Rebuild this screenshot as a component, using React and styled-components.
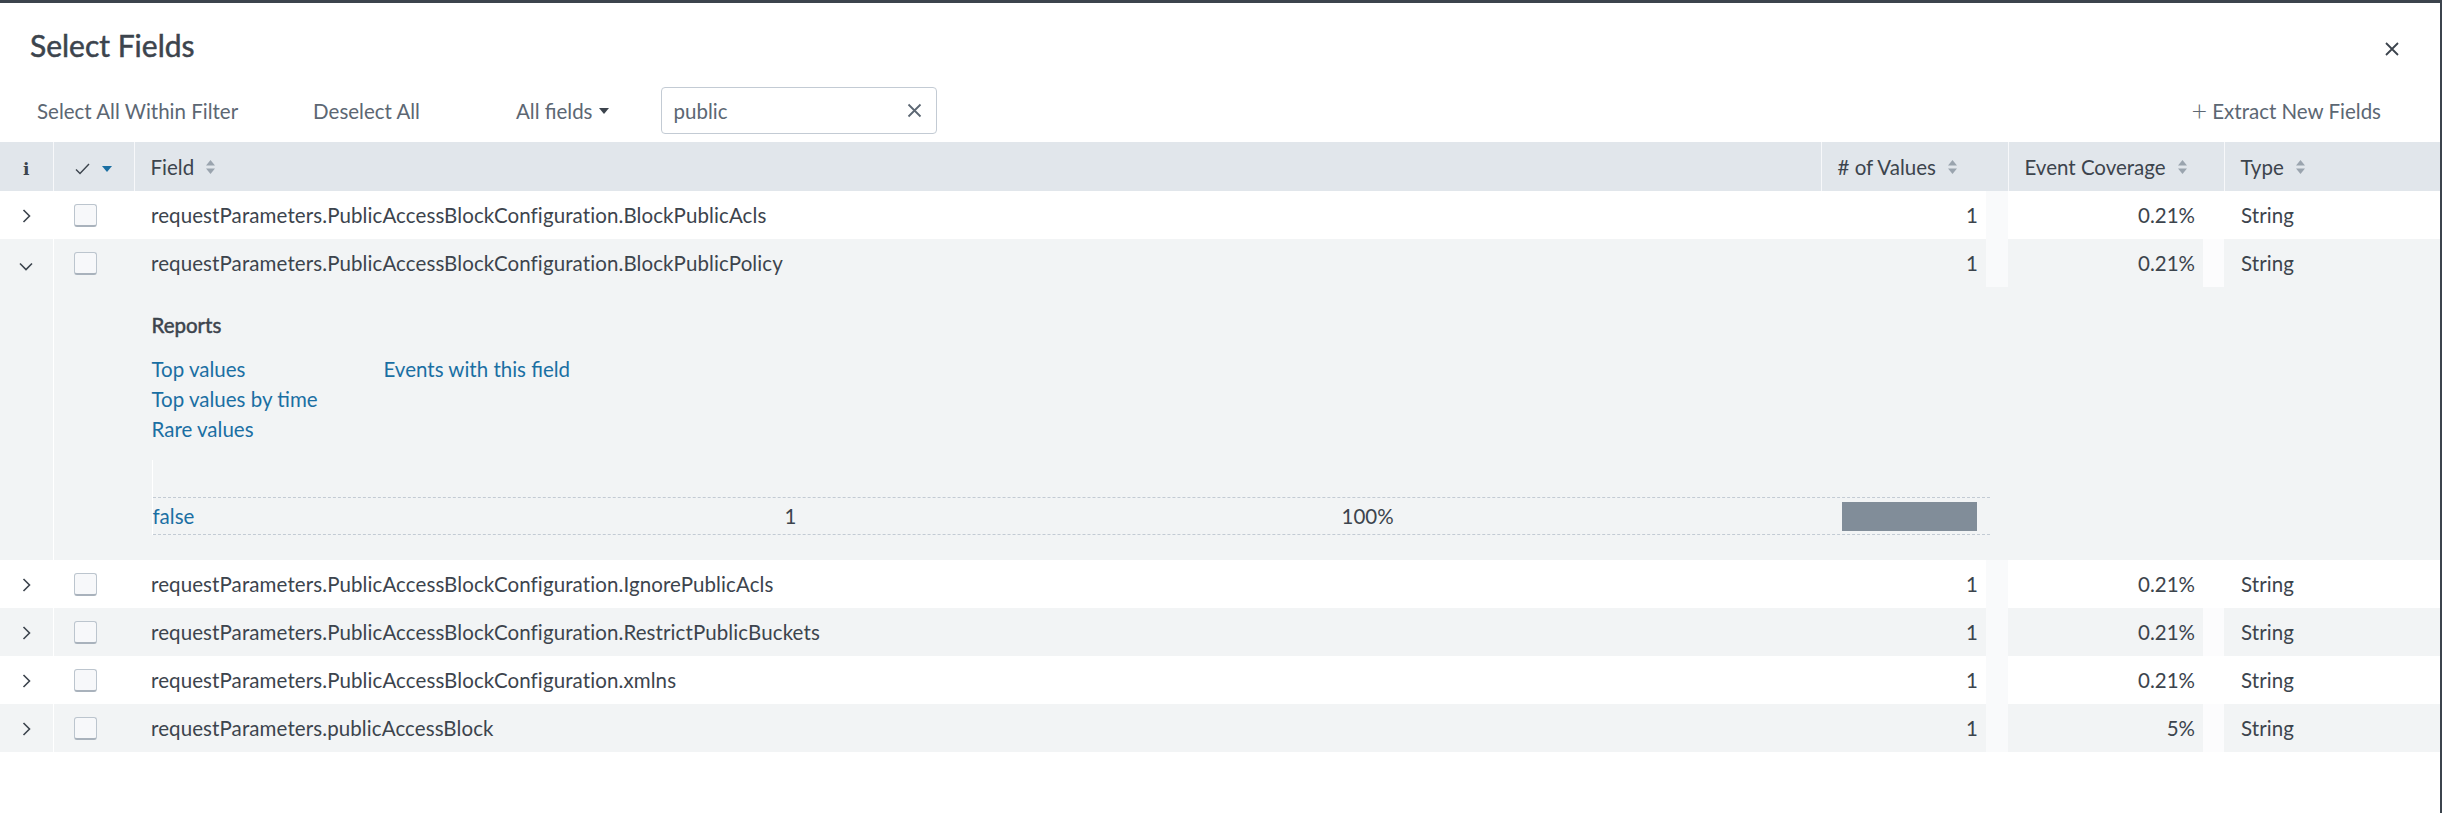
import React from 'react';
import styled, { createGlobalStyle } from 'styled-components';

const GlobalStyle = createGlobalStyle`
  html, body {
    margin: 0;
    padding: 0;
    background: #fff;
  }
  body {
    font-family: Lato, "Noto Sans", "Liberation Sans", sans-serif;
    color: #3c444d;
  }
`;

const Modal = styled.div`
  box-sizing: border-box;
  width: 2442px;
  height: 813px;
  border-top: 3px solid #3c444d;
  border-right: 2px solid #3c444d;
  background: #fff;
`;

const TitleBar = styled.div`
  display: flex;
  align-items: center;
  justify-content: space-between;
  height: 84px;
  padding: 0 40px 0 30px;
  box-sizing: border-box;
`;

const Title = styled.h1`
  margin: 0;
  font-size: 30px;
  font-weight: 400;
  -webkit-text-stroke: 0.5px #3c444d;
  color: #3c444d;
`;

const CloseButton = styled.button`
  border: 0;
  background: none;
  padding: 0;
  margin-top: 8px;
  width: 16px;
  height: 16px;
  display: flex;
  color: #3c444d;
`;

const Toolbar = styled.div`
  display: flex;
  align-items: center;
  height: 47px;
  padding: 0 59px 0 37px;
  margin-bottom: 8px;
`;

const ToolButton = styled.button`
  border: 0;
  background: none;
  padding: 0;
  margin-right: ${(p) => p.$gap || 0}px;
  font: inherit;
  font-size: 20.5px;
  color: #5c6773;
  display: flex;
  align-items: center;
  gap: 6px;
  white-space: nowrap;
`;

const Caret = styled.span`
  width: 0;
  height: 0;
  border-left: 5px solid transparent;
  border-right: 5px solid transparent;
  border-top: 6px solid ${(p) => p.$color || '#3c444d'};
  display: inline-block;
`;

const SearchBox = styled.div`
  box-sizing: border-box;
  width: 276px;
  height: 47px;
  border: 1px solid #c3cbd4;
  border-radius: 4px;
  display: flex;
  align-items: center;
  justify-content: space-between;
  padding: 0 14px 0 12px;
  font-size: 20.5px;
  color: #5c6773;
`;

const ExtractLink = styled(ToolButton)`
  margin-left: auto;
  gap: 5px;
`;

const Plus = styled.span`
  font-size: 27px;
  line-height: 1;
  font-weight: 300;
`;

const Table = styled.table`
  width: 2440px;
  border-collapse: collapse;
  table-layout: fixed;
  font-size: 20.5px;
`;

const HeadCell = styled.th`
  height: 49px;
  padding: 0 0 0 ${(p) => (p.$center ? 0 : 16)}px;
  background: #e1e6eb;
  border-left: ${(p) => (p.$first ? 0 : '1px solid #f7f8fa')};
  text-align: ${(p) => (p.$center ? 'center' : 'left')};
  font-weight: 400;
  color: #3c444d;
  white-space: nowrap;
`;

const HeadLabel = styled.span`
  display: inline-flex;
  align-items: center;
  gap: 12px;
`;

const InfoGlyph = styled.span`
  font-family: "DejaVu Serif", "Liberation Serif", serif;
  font-weight: 700;
  font-size: 17px;
`;

const Row = styled.tr`
  background: ${(p) => (p.$shade ? '#f2f4f5' : '#fff')};
`;

const Cell = styled.td`
  height: 48px;
  padding: 0 0 0 ${(p) => p.$pad ?? 16}px;
  border-left: ${(p) => (p.$line ? '1px solid #fff' : 0)};
  white-space: nowrap;
  overflow: hidden;
  letter-spacing: 0.1px;
  text-align: ${(p) => (p.$center ? 'center' : 'left')};
  vertical-align: middle;
`;

const NumCell = styled.td`
  height: 48px;
  padding: 0 ${(p) => p.$right}px 0 0;
  text-align: right;
  box-shadow: inset -${(p) => p.$strip}px 0 0 ${(p) => p.$stripColor};
`;

const Chevron = styled.span`
  display: inline-flex;
  color: #3c444d;
`;

const Checkbox = styled.span`
  display: block;
  box-sizing: border-box;
  width: 23px;
  height: 23px;
  border: 1px solid #bcc5ce;
  border-bottom: 2px solid #a9b2bc;
  border-radius: 3px;
  background: #f7f8fa;
`;

const ExpandCell = styled.td`
  padding: 24px 0 25px 98px;
  border-left: 1px solid #fff;
  vertical-align: top;
`;

const ReportsTitle = styled.div`
  font-weight: 400;
  -webkit-text-stroke: 0.5px #3c444d;
  line-height: 28px;
`;

const LinkGrid = styled.div`
  display: grid;
  grid-template-columns: 232px auto;
  grid-auto-rows: 30px;
  align-items: center;
  margin-top: 15px;
`;

const Link = styled.a`
  color: #1a6fa3;
  text-decoration: none;
  cursor: pointer;
`;

const ValueTable = styled.div`
  width: 1837px;
  margin-top: 16px;
  border-left: 1px solid #fff;
`;

const ValueHead = styled.div`
  height: 37px;
  border-bottom: 1px dashed #c3cbd4;
`;

const ValueRow = styled.div`
  display: grid;
  grid-template-columns: 632px 557px 500px 1fr;
  align-items: center;
  height: 36px;
  border-bottom: 1px dashed #c3cbd4;
`;

const Bar = styled.div`
  height: 29px;
  background: #818d99;
`;

const SortIcon = () => (
  <svg width="9" height="14" viewBox="0 0 9 14" fill="#9aa4ae">
    <path d="M4.5 0 L9 5.5 H0 Z" />
    <path d="M4.5 14 L9 8.5 H0 Z" />
  </svg>
);

const CloseIcon = () => (
  <svg width="16" height="16" viewBox="0 0 16 16" stroke="#3c444d" strokeWidth="1.8" fill="none">
    <path d="M2 2 L14 14 M14 2 L2 14" />
  </svg>
);

const ClearIcon = () => (
  <svg width="15" height="15" viewBox="0 0 15 15" stroke="#5c6773" strokeWidth="1.8" fill="none">
    <path d="M1.5 1.5 L13.5 13.5 M13.5 1.5 L1.5 13.5" />
  </svg>
);

const ChevronRight = () => (
  <svg width="9" height="14" viewBox="0 0 9 14" stroke="#3c444d" strokeWidth="1.6" fill="none">
    <path d="M1.5 1 L7.5 7 L1.5 13" />
  </svg>
);

const ChevronDown = () => (
  <svg width="14" height="9" viewBox="0 0 14 9" stroke="#3c444d" strokeWidth="1.6" fill="none">
    <path d="M1 1.5 L7 7.5 L13 1.5" />
  </svg>
);

const CheckMark = () => (
  <svg width="15" height="12" viewBox="0 0 15 12" stroke="#3c444d" strokeWidth="1.4" fill="none">
    <path d="M1 6.5 L5 10.5 L14 1" />
  </svg>
);

const fields = [
  { name: 'requestParameters.PublicAccessBlockConfiguration.BlockPublicAcls', coverage: '0.21%' },
  { name: 'requestParameters.PublicAccessBlockConfiguration.BlockPublicPolicy', coverage: '0.21%', open: true },
  { name: 'requestParameters.PublicAccessBlockConfiguration.IgnorePublicAcls', coverage: '0.21%' },
  { name: 'requestParameters.PublicAccessBlockConfiguration.RestrictPublicBuckets', coverage: '0.21%' },
  { name: 'requestParameters.PublicAccessBlockConfiguration.xmlns', coverage: '0.21%' },
  { name: 'requestParameters.publicAccessBlock', coverage: '5%' },
];

const FieldRow = ({ field, shade }) => (
  <Row $shade={shade}>
    <Cell $pad={0} $center>
      <Chevron>{field.open ? <ChevronDown /> : <ChevronRight />}</Chevron>
    </Cell>
    <Cell $pad={20} $line>
      <Checkbox />
    </Cell>
    <Cell $pad={17}>{field.name}</Cell>
    <NumCell $right={30} $strip={22} $stripColor="#f9fafb">1</NumCell>
    <NumCell $right={29} $strip={21} $stripColor="rgba(255,255,255,0.75)">{field.coverage}</NumCell>
    <Cell $pad={17}>String</Cell>
  </Row>
);

const Details = () => (
  <Row $shade>
    <Cell $pad={0} />
    <ExpandCell colSpan={5}>
      <ReportsTitle>Reports</ReportsTitle>
      <LinkGrid>
        <Link>Top values</Link>
        <Link>Events with this field</Link>
        <Link>Top values by time</Link>
        <span />
        <Link>Rare values</Link>
      </LinkGrid>
      <ValueTable>
        <ValueHead />
        <ValueRow>
          <Link>false</Link>
          <span>1</span>
          <span>100%</span>
          <Bar style={{ width: `${(100 / 100) * 135}px` }} />
        </ValueRow>
      </ValueTable>
    </ExpandCell>
  </Row>
);

export default function App() {
  return (
    <>
      <GlobalStyle />
      <Modal>
        <TitleBar>
          <Title>Select Fields</Title>
          <CloseButton aria-label="Close">
            <CloseIcon />
          </CloseButton>
        </TitleBar>
        <Toolbar>
          <ToolButton $gap={75}>Select All Within Filter</ToolButton>
          <ToolButton $gap={96}>Deselect All</ToolButton>
          <ToolButton $gap={52}>
            All fields <Caret />
          </ToolButton>
          <SearchBox>
            <span>public</span>
            <ClearIcon />
          </SearchBox>
          <ExtractLink>
            <Plus>+</Plus>Extract New Fields
          </ExtractLink>
        </Toolbar>
        <Table>
          <colgroup>
            <col style={{ width: 53 }} />
            <col style={{ width: 81 }} />
            <col style={{ width: 1687 }} />
            <col style={{ width: 187 }} />
            <col style={{ width: 216 }} />
            <col style={{ width: 216 }} />
          </colgroup>
          <thead>
            <tr>
              <HeadCell $first $center>
                <InfoGlyph>i</InfoGlyph>
              </HeadCell>
              <HeadCell $center>
                <HeadLabel>
                  <CheckMark />
                  <Caret $color="#1a6fa3" />
                </HeadLabel>
              </HeadCell>
              <HeadCell>
                <HeadLabel>
                  Field <SortIcon />
                </HeadLabel>
              </HeadCell>
              <HeadCell>
                <HeadLabel>
                  # of Values <SortIcon />
                </HeadLabel>
              </HeadCell>
              <HeadCell>
                <HeadLabel>
                  Event Coverage <SortIcon />
                </HeadLabel>
              </HeadCell>
              <HeadCell>
                <HeadLabel>
                  Type <SortIcon />
                </HeadLabel>
              </HeadCell>
            </tr>
          </thead>
          <tbody>
            {fields.map((field, i) => (
              <React.Fragment key={field.name}>
                <FieldRow field={field} shade={field.open || i % 2 === 1} />
                {field.open && <Details />}
              </React.Fragment>
            ))}
          </tbody>
        </Table>
      </Modal>
    </>
  );
}
